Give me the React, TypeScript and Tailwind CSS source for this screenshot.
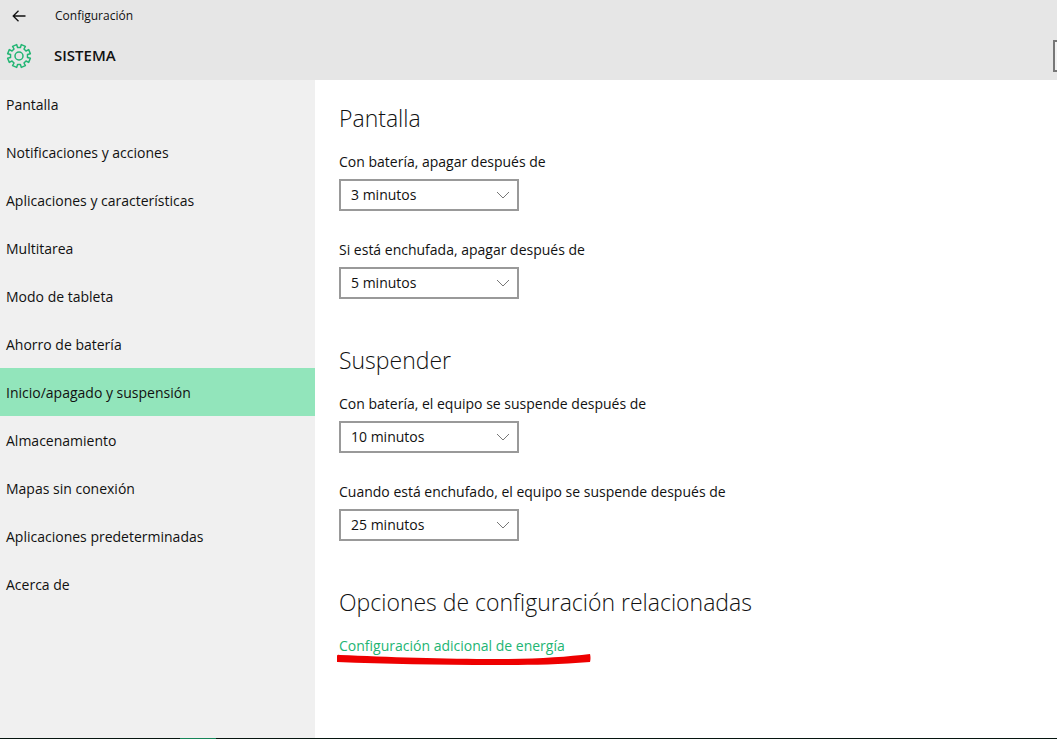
import { useState } from "react";

const sections = [
  "Pantalla",
  "Notificaciones y acciones",
  "Aplicaciones y características",
  "Multitarea",
  "Modo de tableta",
  "Ahorro de batería",
  "Inicio/apagado y suspensión",
  "Almacenamiento",
  "Mapas sin conexión",
  "Aplicaciones predeterminadas",
  "Acerca de",
];

const durations = ["3 minutos", "5 minutos", "10 minutos", "25 minutos"];

function gearPath() {
  const points: string[] = [];
  for (let i = 0; i < 8; i++) {
    const steps = [
      [8.6, -13],
      [11.6, -11],
      [11.6, 11],
      [8.6, 13],
    ];
    for (const [radius, offset] of steps) {
      const angle = ((i * 45 + 22.5 + offset) * Math.PI) / 180;
      points.push(`${(Math.cos(angle) * radius).toFixed(2)} ${(Math.sin(angle) * radius).toFixed(2)}`);
    }
  }
  return `M${points.join("L")}Z`;
}

function GearIcon() {
  return (
    <svg viewBox="-13 -13 26 26" className="size-[26px] shrink-0" fill="none" stroke="#22b573" strokeWidth="1.5" strokeLinejoin="round" aria-hidden="true">
      <path d={gearPath()} />
      <circle r="4" />
    </svg>
  );
}

function DurationSelect({ id, label, initial }: { id: string; label: string; initial: string }) {
  const [value, setValue] = useState(initial);

  return (
    <div>
      <label htmlFor={id} className="block leading-5">
        {label}
      </label>
      <div className="relative mt-[7px] w-45">
        <select
          id={id}
          value={value}
          onChange={(e) => setValue(e.target.value)}
          className="block h-8 w-full appearance-none border-2 border-[#999999] bg-white pl-2.5 pr-8"
        >
          {durations.map((d) => (
            <option key={d}>{d}</option>
          ))}
        </select>
        <svg viewBox="0 0 14 8" className="pointer-events-none absolute right-[9px] top-3 h-2 w-3.5" fill="none" stroke="#777777" aria-hidden="true">
          <path d="M1 1l6 6 6-6" />
        </svg>
      </div>
    </div>
  );
}

export default function App() {
  const [active, setActive] = useState("Inicio/apagado y suspensión");

  return (
    <div className="flex min-h-screen flex-col overflow-hidden bg-white font-['Open_Sans',sans-serif] text-sm text-[#111111]">
      <header className="h-20 bg-[#e6e6e6]">
        <div className="flex h-8 items-center">
          <button type="button" aria-label="Atrás" className="ml-3 mr-[29px]">
            <svg viewBox="0 0 14 12" className="h-3 w-3.5" fill="none" stroke="#111111" strokeWidth="1.3" aria-hidden="true">
              <path d="M13.5 6H1M6.5 .8L1.2 6l5.3 5.2" />
            </svg>
          </button>
          <span className="text-xs">Configuración</span>
        </div>
        <div className="flex h-12 items-center pl-1.5">
          <GearIcon />
          <h1 className="ml-[22px] text-[15px] font-semibold">SISTEMA</h1>
          <input
            type="search"
            aria-label="Buscar una configuración"
            className="-mr-60 ml-auto h-8 w-61 shrink-0 border-2 border-[#777777] bg-[#f2f2f2]"
          />
        </div>
      </header>

      <div className="flex flex-1">
        <nav className="w-[315px] shrink-0 bg-[#f0f0f0]">
          {sections.map((name) => (
            <button
              key={name}
              type="button"
              onClick={() => setActive(name)}
              className={`block h-12 w-full px-1.5 pt-0.5 text-left ${name === active ? "bg-[#92e5bb]" : ""}`}
            >
              {name}
            </button>
          ))}
        </nav>

        <main className="flex-1 px-6 pt-5">
          <section>
            <h2 className="mb-4 text-[23px] font-light leading-9">Pantalla</h2>
            <div className="flex flex-col gap-[29px]">
              <DurationSelect id="screen-battery" label="Con batería, apagar después de" initial="3 minutos" />
              <DurationSelect id="screen-plugged" label="Si está enchufada, apagar después de" initial="5 minutos" />
            </div>
          </section>

          <section className="mt-[43px]">
            <h2 className="mb-4 text-[23px] font-light leading-9">Suspender</h2>
            <div className="flex flex-col gap-[29px]">
              <DurationSelect id="sleep-battery" label="Con batería, el equipo se suspende después de" initial="10 minutos" />
              <DurationSelect id="sleep-plugged" label="Cuando está enchufado, el equipo se suspende después de" initial="25 minutos" />
            </div>
          </section>

          <section className="mt-[43px]">
            <h2 className="mb-4 text-[23px] font-light leading-9">Opciones de configuración relacionadas</h2>
            <a href="#energia" className="relative block w-fit leading-5 text-[#22b573]">
              Configuración adicional de energía
              <svg viewBox="0 0 256 14" className="absolute -left-[3px] top-4 h-3.5 w-64" fill="#ee0000" aria-hidden="true">
                <path d="M1 4Q1 2 4 3C50 5 110 7 160 7C200 7 230 5 254 2Q255 6 254 10C220 13 190 13 160 13C100 13 50 12 1 10Z" />
              </svg>
            </a>
          </section>
        </main>
      </div>

      <footer className="h-px bg-[#06150f]">
        <div className="ml-45 h-px w-9 bg-[#168458]" />
      </footer>
    </div>
  );
}
